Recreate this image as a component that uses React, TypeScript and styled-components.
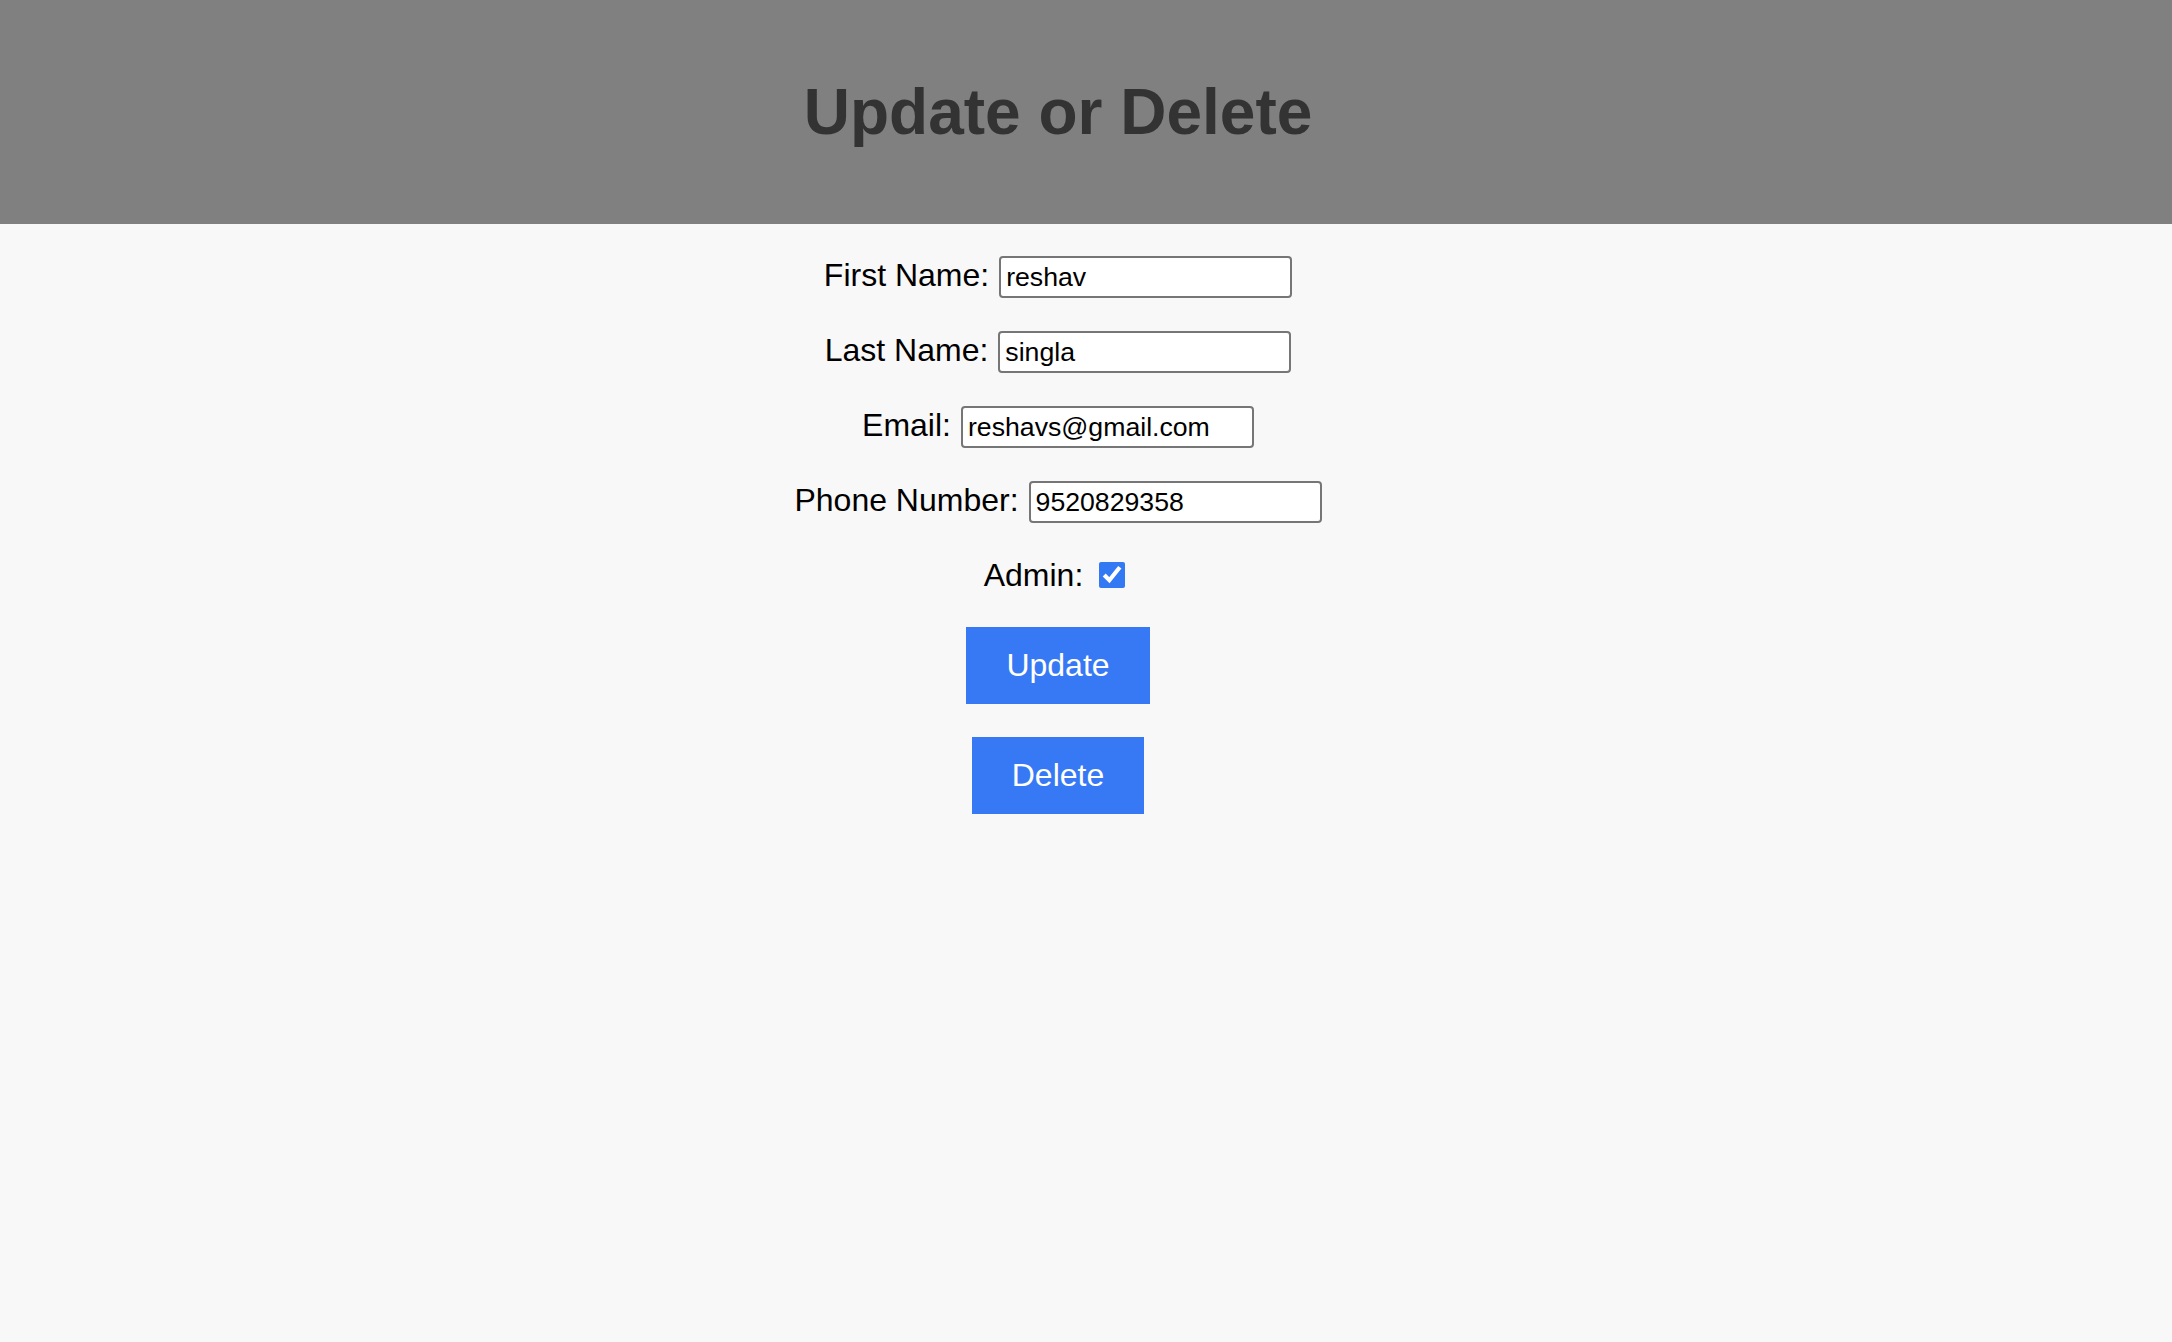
import React, { useState } from "react";
import styled, { createGlobalStyle } from "styled-components";

const GlobalStyle = createGlobalStyle`
  html, body {
    margin: 0;
    padding: 0;
    background: #f8f8f8;
  }
  body {
    font-family: "Liberation Sans", Arial, Helvetica, sans-serif;
    color: #000;
  }
  #root {
    min-height: 100vh;
  }
`;

const Page = styled.div`
  min-height: 100vh;
  background: #f8f8f8;
`;

const Header = styled.header`
  height: 224px;
  background: #808080;
  display: flex;
  align-items: center;
  justify-content: center;
  padding-right: 56px;
  box-sizing: border-box;
`;

const Title = styled.h1`
  margin: 0;
  font-size: 64px;
  font-weight: 700;
  color: #333333;
  line-height: normal;
`;

const Form = styled.form`
  display: flex;
  flex-direction: column;
  align-items: center;
  gap: 33px;
  padding: 32px 56px 0 0;
`;

const Row = styled.div`
  display: flex;
  align-items: baseline;
  gap: 10px;
`;

const CheckRow = styled.div`
  display: flex;
  align-items: center;
  margin-right: 2px;
`;

const Label = styled.label`
  font-size: 32px;
  line-height: normal;
  color: #000;
`;

const TextInput = styled.input`
  box-sizing: border-box;
  width: 293px;
  height: 42px;
  padding: 0 5px;
  border: 2px solid #767676;
  border-radius: 4px;
  background: #ffffff;
  font-family: "Liberation Sans", Arial, sans-serif;
  font-size: 26.67px;
  color: #000;
  outline: none;
`;

const CheckBox = styled.input`
  width: 26px;
  height: 26px;
  margin: 6px 5px 6px 16px;
  accent-color: #3479f4;
`;

const Button = styled.button<{ $width: number }>`
  width: ${(p) => p.$width}px;
  height: 77px;
  border: none;
  border-radius: 0;
  background: #3779f4;
  color: #ffffff;
  font-family: "Liberation Sans", Arial, sans-serif;
  font-size: 32px;
  padding: 0;
  cursor: pointer;
`;

export default function App() {
  const [first, setFirst] = useState("reshav");
  const [last, setLast] = useState("singla");
  const [email, setEmail] = useState("reshavs@gmail.com");
  const [phone, setPhone] = useState("9520829358");
  const [admin, setAdmin] = useState(true);

  return (
    <Page>
      <GlobalStyle />
      <Header>
        <Title>Update or Delete</Title>
      </Header>
      <Form onSubmit={(e) => e.preventDefault()}>
        <Row>
          <Label htmlFor="first">First Name:</Label>
          <TextInput id="first" value={first} onChange={(e) => setFirst(e.target.value)} />
        </Row>
        <Row>
          <Label htmlFor="last">Last Name:</Label>
          <TextInput id="last" value={last} onChange={(e) => setLast(e.target.value)} />
        </Row>
        <Row>
          <Label htmlFor="email">Email:</Label>
          <TextInput id="email" value={email} onChange={(e) => setEmail(e.target.value)} />
        </Row>
        <Row>
          <Label htmlFor="phone">Phone Number:</Label>
          <TextInput id="phone" value={phone} onChange={(e) => setPhone(e.target.value)} />
        </Row>
        <CheckRow>
          <Label htmlFor="admin">Admin:</Label>
          <CheckBox
            id="admin"
            type="checkbox"
            checked={admin}
            onChange={(e) => setAdmin(e.target.checked)}
          />
        </CheckRow>
        <Button type="button" $width={184}>Update</Button>
        <Button type="button" $width={172}>Delete</Button>
      </Form>
    </Page>
  );
}
